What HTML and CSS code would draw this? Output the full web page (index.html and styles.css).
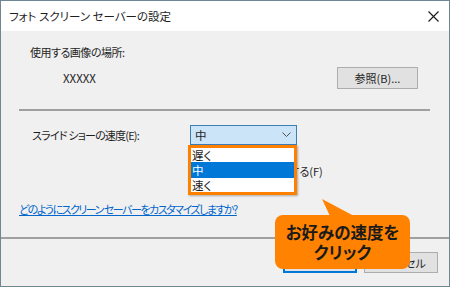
FILE: index.html
```html
<!DOCTYPE html>
<html lang="ja">
<head>
  <meta charset="UTF-8" />
  <title>フォト スクリーン セーバーの設定</title>
  <link rel="stylesheet" href="styles.css">
</head>
<body>
  <div class="window">
    <div class="titlebar">
      <span class="title">フォト スクリーン セーバーの設定</span>
      <svg class="close" width="11" height="11" viewBox="0 0 11 11">
        <path d="M0.5 0.5 L10.5 10.5 M10.5 0.5 L0.5 10.5" stroke="#1a1a1a" stroke-width="1.1" fill="none"/>
      </svg>
    </div>

    <div class="content">
      <div class="field-label">使用する画像の場所:</div>
      <div class="path-row">
        <span class="path">XXXXX</span>
        <button class="btn browse">参照(B)...</button>
      </div>

      <div class="sep"></div>

      <div class="speed-row">
        <label class="speed-label">スライド ショーの速度(E):</label>
        <div class="combo-wrap">
          <div class="combo">
            <span>中</span>
            <svg width="9" height="5" viewBox="0 0 9 5">
              <path d="M0.5 0.5 L4.5 4.5 L8.5 0.5" stroke="#505050" stroke-width="1" fill="none"/>
            </svg>
          </div>
          <ul class="dropdown">
            <li>遅く</li>
            <li class="selected">中</li>
            <li>速く</li>
          </ul>
        </div>
      </div>

      <div class="shuffle-row">
        <span class="checkbox"></span>
        <span>画像をシャッフルする(F)</span>
      </div>

      <a class="help" href="#">どのようにスクリーン セーバーをカスタマイズしますか?</a>
    </div>

    <div class="footer">
      <button class="btn ok"></button>
      <button class="btn cancel">キャンセル</button>
    </div>

    <div class="callout">
      <svg class="pointer" width="34" height="18" viewBox="0 0 34 18">
        <path d="M0 0 L8 17 L32 17 Z" fill="#ff8200"/>
      </svg>
      お好みの速度を<br>クリック
    </div>
  </div>
</body>
</html>
```

FILE: styles.css
```css
body { margin: 0; font-family: "Noto Sans CJK JP", "Noto Sans", sans-serif; }

.window { position: relative; width: 450px; height: 287px; box-sizing: border-box; border: 1px solid #6d8794; background: #f0f0f0; color: #1e1e1e; font-size: 11px; display: flex; flex-direction: column; font-feature-settings: "palt"; }

.titlebar { height: 30px; background: #fff; display: flex; align-items: center; justify-content: space-between; padding: 0 10px 0 8px; }
.title { font-size: 11.5px; }
.close { margin-top: 1px; }

.content { height: 206px; box-sizing: border-box; padding-top: 14px; }
.field-label { line-height: 14px; padding-left: 29px; letter-spacing: -0.5px; }

.path-row { display: flex; align-items: center; height: 22px; margin-top: 8px; padding-left: 62px; }
.path { width: 274px; font-size: 11.5px; }

.btn { font-family: inherit; font-size: 11px; font-feature-settings: "palt"; background: #e1e1e1; border: 1px solid #adadad; color: #1e1e1e; padding: 0; height: 21px; width: 74px; }
.browse { width: 81px; height: 22px; }

.sep { margin: 20px 0 0 18px; width: 411px; height: 2px; background: #a0a0a0; }

.speed-row { display: flex; align-items: center; margin-top: 13px; height: 21px; }
.speed-label { width: 158px; padding-left: 31px; letter-spacing: -0.8px; }
.combo-wrap { position: relative; }
.combo { width: 107px; height: 20px; box-sizing: border-box; background: #cce4f7; border: 1px solid #3c7fb1; display: flex; align-items: center; justify-content: space-between; padding: 0 5px 0 4px; font-size: 11.5px; }

.dropdown { position: absolute; left: -2px; top: 20px; width: 103px; margin: 0; padding: 0; list-style: none; background: #fff; border: 3px solid #ff7f00; box-shadow: 1px 1px 2px rgba(0,0,0,0.3); font-size: 11.5px; }
.dropdown li { height: 14px; line-height: 14px; padding-left: 1px; }
.dropdown .selected { height: 16px; line-height: 16px; background: #0078d7; color: #fff; }

.shuffle-row { display: flex; align-items: center; gap: 5px; margin-top: 19px; height: 14px; padding-left: 191px; }
.checkbox { width: 11px; height: 11px; border: 1px solid #333; background: #fff; }

.help { display: inline-block; margin: 24px 0 0 18px; line-height: 14px; color: #0066cc; text-decoration: underline; letter-spacing: -1.5px; }

.footer { flex: 1; border-top: 2px solid #a0a0a0; display: flex; justify-content: flex-end; align-items: flex-start; gap: 7px; padding: 13px 11px 0 0; }
.ok { border-color: #0078d7; box-shadow: inset 0 0 0 1px #0078d7; }

.callout { position: absolute; left: 274px; top: 214px; width: 135px; height: 54px; box-sizing: border-box; background: #ff8200; border-radius: 8px; text-align: center; font-size: 16.5px; font-weight: bold; line-height: 20px; padding-top: 7px; color: #1a1a1a; }
.pointer { position: absolute; left: 47px; top: -16px; }
```
